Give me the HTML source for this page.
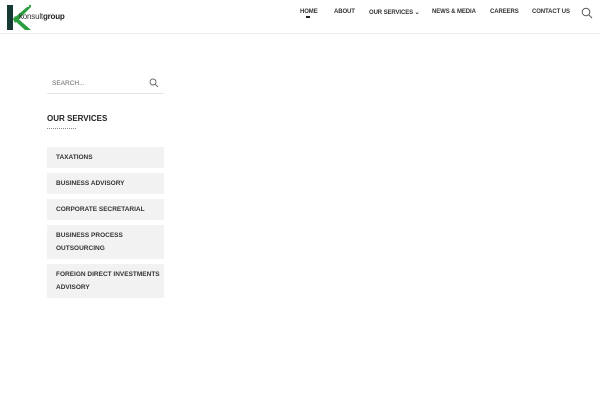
<!DOCTYPE html>
<html><head><style>
*{margin:0;padding:0;box-sizing:border-box}
body{width:600px;height:400px;background:#fff;font-family:"Liberation Sans",sans-serif;position:relative;overflow:hidden;color:#222}
.hdr{position:absolute;left:0;top:0;width:600px;height:34px;border-bottom:1px solid #eee}
.nav{position:absolute;top:9px;font-size:6px;font-weight:bold;color:#333;letter-spacing:-0.1px}
.box{position:absolute;left:47px;width:117px;background:#f2f2f2;font-size:6.5px;font-weight:bold;color:#333;padding-left:9px;line-height:13px;white-space:nowrap}
</style></head><body>
<div class="hdr">
<svg style="position:absolute;left:5px;top:3px" width="28" height="28" viewBox="0 0 28 28">
<rect x="2" y="2" width="6" height="25" fill="#163a33"/>
<polygon points="8,16 22,4 26,4 10,20" fill="#2a9d3e"/>
<polygon points="8,16 20,27 26,27 10,13" fill="#2a9d3e"/>
<circle cx="25" cy="3" r="1.2" fill="#2a9d3e"/>
</svg>
<div style="position:absolute;left:19px;top:12px;font-size:8px;color:#333;letter-spacing:-0.2px">konsult<b style="color:#222">group</b></div>
<div class="nav" style="left:300px">HOME</div>
<div style="position:absolute;left:306px;top:16px;width:4px;height:2px;background:#222"></div>
<div class="nav" style="left:334px">ABOUT</div>
<div class="nav" style="left:369px">OUR SERVICES ⌄</div>
<div class="nav" style="left:432px">NEWS &amp; MEDIA</div>
<div class="nav" style="left:490px">CAREERS</div>
<div class="nav" style="left:532px">CONTACT US</div>
<svg style="position:absolute;left:581px;top:7px" width="12" height="12" viewBox="0 0 12 12"><circle cx="5" cy="5" r="3.8" fill="none" stroke="#555" stroke-width="1"/><line x1="7.8" y1="7.8" x2="11" y2="11" stroke="#555" stroke-width="1"/></svg>
</div>
<div style="position:absolute;left:47px;top:73px;width:117px;height:21px;border-bottom:1px solid #e5e5e5;font-size:6.5px;color:#666;padding:7px 0 0 5px">SEARCH...</div>
<svg style="position:absolute;left:149px;top:78px" width="10" height="10" viewBox="0 0 10 10"><circle cx="4" cy="4" r="3" fill="none" stroke="#666" stroke-width="0.9"/><line x1="6.2" y1="6.2" x2="9" y2="9" stroke="#666" stroke-width="0.9"/></svg>
<div style="position:absolute;left:47px;top:114px;font-size:8px;font-weight:bold;color:#222">OUR SERVICES</div>
<div style="position:absolute;left:47px;top:128px;width:29px;border-top:1px dotted #888"></div>
<div class="box" style="top:147px;height:21px;padding-top:4px">TAXATIONS</div>
<div class="box" style="top:173px;height:21px;padding-top:4px">BUSINESS ADVISORY</div>
<div class="box" style="top:199px;height:21px;padding-top:4px">CORPORATE SECRETARIAL</div>
<div class="box" style="top:225px;height:34px;padding-top:4px">BUSINESS PROCESS<br>OUTSOURCING</div>
<div class="box" style="top:264px;height:34px;padding-top:4px">FOREIGN DIRECT INVESTMENTS<br>ADVISORY</div>
</body></html>
